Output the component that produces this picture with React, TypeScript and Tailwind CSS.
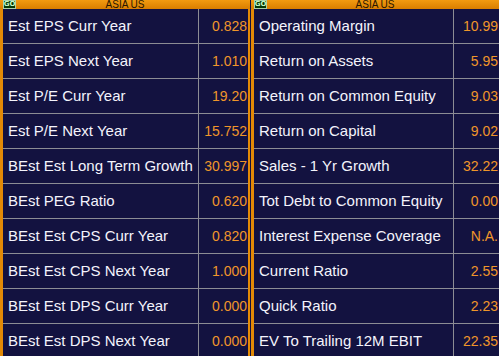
const left: [string, string][] = [
  ["Est EPS Curr Year", "0.828"],
  ["Est EPS Next Year", "1.010"],
  ["Est P/E Curr Year", "19.20"],
  ["Est P/E Next Year", "15.752"],
  ["BEst Est Long Term Growth", "30.997"],
  ["BEst PEG Ratio", "0.620"],
  ["BEst Est CPS Curr Year", "0.820"],
  ["BEst Est CPS Next Year", "1.000"],
  ["BEst Est DPS Curr Year", "0.000"],
  ["BEst Est DPS Next Year", "0.000"],
];

const right: [string, string][] = [
  ["Operating Margin", "10.99"],
  ["Return on Assets", "5.95"],
  ["Return on Common Equity", "9.03"],
  ["Return on Capital", "9.02"],
  ["Sales - 1 Yr Growth", "32.22"],
  ["Tot Debt to Common Equity", "0.00"],
  ["Interest Expense Coverage", "N.A."],
  ["Current Ratio", "2.55"],
  ["Quick Ratio", "2.23"],
  ["EV To Trailing 12M EBIT", "22.35"],
];

function Header() {
  return (
    <div className="relative h-[9px] bg-gradient-to-b from-[#f29a10] to-[#d97e00] flex items-center justify-center">
      {/* GO badge */}
      <div className="absolute left-[3px] top-0 h-[9px] w-[13px] bg-[#063806] border border-[#a8d0a8] flex items-center justify-center">
        <span className="text-[7px] leading-[7px] font-bold text-[#c8f8c8] font-['DejaVu_Sans',sans-serif]">GO</span>
      </div>
      <span className="text-[10px] leading-[9px] text-[#2a1600] font-['Liberation_Sans',Arial,sans-serif]">ASIA US</span>
    </div>
  );
}

function Panel({ rows, valueWidth, borderRight }: { rows: [string, string][]; valueWidth: string; borderRight?: boolean }) {
  return (
    <div className="flex flex-col h-full">
      <Header />
      <div className={`flex-1 flex flex-col border-l-[3px] border-[#e38a06] ${borderRight ? "border-r-2" : ""} overflow-hidden`}>
        {rows.map(([label, value]) => (
          <div key={label} className="flex h-[35px] shrink-0 border-b border-[#8c8c94]">
            <div className="flex-1 flex items-center pl-[5px] text-[15px] text-[#f4f4fc] whitespace-nowrap">
              {label}
            </div>
            <div className={`${valueWidth} flex items-center justify-end pr-[1px] border-l border-[#8c8c94] text-[14px] text-[#f0962a]`}>
              {value}
            </div>
          </div>
        ))}
      </div>
    </div>
  );
}

export default function App() {
  return (
    <div className="w-[499px] h-[356px] overflow-hidden bg-[#131240] flex font-['Liberation_Sans',Arial,sans-serif]">
      <div className="w-[250px] h-full">
        <Panel rows={left} valueWidth="w-[50px]" borderRight />
      </div>
      <div className="w-[1px] h-full bg-[#131240]" />
      <div className="flex-1 h-full">
        <Panel rows={right} valueWidth="w-[46px]" />
      </div>
    </div>
  );
}
